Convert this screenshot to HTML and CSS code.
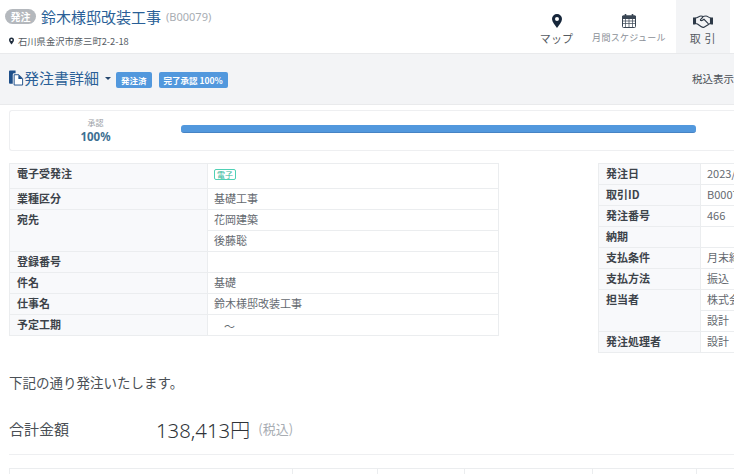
FILE: index.html
```html
<!DOCTYPE html>
<html lang="ja">
<head>
<meta charset="utf-8">
<title>発注書詳細</title>
<link rel="stylesheet" href="styles.css">
</head>
<body>
<header class="top">
  <div class="top-info">
    <div class="title-row">
      <span class="pill">発注</span>
      <span class="title">鈴木様邸改装工事</span>
      <span class="code">(B00079)</span>
    </div>
    <div class="address">
      <svg class="pin-small" viewBox="0 0 10 14"><path fill="#1f2d3d" fill-rule="evenodd" d="M5 0a5 5 0 0 1 5 5c0 3-3 6-5 9C3 11 0 8 0 5a5 5 0 0 1 5-5zm0 3a2 2 0 1 0 0 4 2 2 0 0 0 0-4z"/></svg>
      <span>石川県金沢市彦三町2-2-18</span>
    </div>
  </div>
  <nav class="tabs">
    <div class="tab tab-map">
      <svg class="tab-icon" width="10" height="14" viewBox="0 0 10 14"><path fill="#16263a" fill-rule="evenodd" d="M5 0a5 5 0 0 1 5 5c0 3-3 6-5 9C3 11 0 8 0 5a5 5 0 0 1 5-5zm0 3a2 2 0 1 0 0 4 2 2 0 0 0 0-4z"/></svg>
      <span class="tab-label">マップ</span>
    </div>
    <div class="tab tab-cal">
      <svg class="tab-icon" width="14" height="14" viewBox="0 0 14 14" fill="none" stroke="#3a4654"><rect x=".5" y="2" width="13" height="11.500" rx="1"/><path d="M.5 2h13v2.500H.5z" fill="#3a4654"/><path d="M3.500 0v3M10.500 0v3" stroke-width="1.600"/><path d="M.5 7h13M.5 9.500h13M3.500 4.500v9M7 4.500v9M10.500 4.500v9" stroke-width=".7"/></svg>
      <span class="tab-label tab-label-small">月間スケジュール</span>
    </div>
    <div class="tab tab-deal">
      <svg class="tab-icon" width="20" height="14" viewBox="0 0 20 14" fill="none" stroke="#2d3947"><path d="M0 3.500h2.500v7H0zM17.500 3.500H20v7h-2.500z" fill="#2d3947" stroke="none"/><path d="M2.500 4C5 3.500 6 2 8 2c1 0 1.500.5 2 .5S12 2 13 2c1.500 0 2.500 1.500 4.500 2v5.500c-1 0-1.500.5-2 1L11 13.200c-1 .5-2 0-3-.7L4.500 10c-.5-.5-1-.5-2-.5z" stroke-width="1.100"/><path d="M10 3 7.500 5.500c-.5 1 1 1.500 2 .8l1.500-1 4.500 4.500" stroke-width="1.100"/></svg>
      <span class="tab-label tab-label-wide">取 引</span>
    </div>
  </nav>
</header>

<section class="toolbar">
  <div class="toolbar-left">
    <svg class="doc-icon" width="15" height="16" viewBox="0 0 16 16"><path fill="#1e4f8a" d="M0 1a1 1 0 0 1 1-1h6v3H5.500A1.500 1.500 0 0 0 4 4.500V14H1a1 1 0 0 1-1-1z"/><path fill="#fff" stroke="#1e4f8a" d="M5.500 4.500h5l4 4v7h-9z"/><path fill="#1e4f8a" d="M10 4.500v4.500h4.500z"/></svg>
    <h1 class="page-title">発注書詳細</h1>
    <span class="caret"></span>
    <span class="badge">発注済</span>
    <span class="badge badge-wide">完了承認 100%</span>
  </div>
  <span class="tax">税込表示</span>
</section>

<section class="progress-card">
  <div class="progress-text">
    <div class="progress-label">承認</div>
    <div class="progress-value">100%</div>
  </div>
  <div class="bar"></div>
</section>

<section class="tables">
  <table class="info info-left">
    <tr class="row-first"><th>電子受発注</th><td><span class="tag">電子</span></td></tr>
    <tr><th>業種区分</th><td>基礎工事</td></tr>
    <tr><th rowspan="2">宛先</th><td>花岡建築</td></tr>
    <tr><td>後藤聡</td></tr>
    <tr><th>登録番号</th><td></td></tr>
    <tr><th>件名</th><td>基礎</td></tr>
    <tr><th>仕事名</th><td>鈴木様邸改装工事</td></tr>
    <tr><th>予定工期</th><td class="period">～</td></tr>
  </table>
  <table class="info info-right">
    <tr><th>発注日</th><td>2023/05/01</td></tr>
    <tr><th>取引ID</th><td>B00079</td></tr>
    <tr><th>発注番号</th><td>466</td></tr>
    <tr><th>納期</th><td></td></tr>
    <tr><th>支払条件</th><td>月末締め</td></tr>
    <tr><th>支払方法</th><td>振込</td></tr>
    <tr><th rowspan="2">担当者</th><td>株式会社</td></tr>
    <tr><td>設計</td></tr>
    <tr><th>発注処理者</th><td>設計</td></tr>
  </table>
</section>

<p class="message">下記の通り発注いたします。</p>

<div class="total">
  <span class="total-label">合計金額</span>
  <span class="total-value">138,413円</span>
  <span class="total-tax">(税込)</span>
</div>

<div class="bottom-grid">
  <div class="cell cell-a"></div>
  <div class="cell cell-b"></div>
  <div class="cell cell-c"></div>
  <div class="cell cell-d"></div>
  <div class="cell cell-e"></div>
  <div class="cell cell-f"></div>
</div>
</body>
</html>
```
FILE: styles.css
```css
* { box-sizing: border-box; }
html, body { margin: 0; height: 474px; overflow: hidden; }
body {
  width: 734px;
  background: #fff;
  color: #4a4f55;
  font-family: "Noto Sans CJK JP", "Noto Sans", sans-serif;
  font-size: 11px;
}

/* header */
.top {
  height: 54px;
  display: flex;
  justify-content: space-between;
  border-bottom: 1px solid #e9eaec;
}
.top-info { padding: 5px 0 0 5px; }
.title-row { display: flex; align-items: center; height: 22px; }
.pill {
  width: 31px;
  height: 15px;
  border-radius: 8px;
  background: #b4b8bd;
  color: #fff;
  font-size: 10px;
  font-weight: 700;
  line-height: 15px;
  text-align: center;
}
.title { margin-left: 5px; color: #2a5f97; font-size: 15px; }
.code { margin-left: 5px; color: #a8adb3; font-size: 11px; font-family: "Noto Sans", sans-serif; }
.address {
  display: flex;
  align-items: center;
  margin: 7px 0 0 4px;
  font-size: 9.300px;
  color: #555b62;
}
.pin-small { width: 5px; height: 8px; margin-right: 4px; }

.tabs { display: flex; }
.tab {
  height: 53px;
  display: flex;
  flex-direction: column;
  align-items: center;
  padding-top: 14px;
}
.tab-icon { flex: none; }
.tab-map { width: 49px; margin-right: 5px; }
.tab-cal { width: 86px; margin-right: 4px; }
.tab-deal { width: 54px; margin-right: 4px; background: #f3f4f6; }
.tab-label { margin-top: 2px; font-size: 11px; line-height: 16px; letter-spacing: .2px; color: #555b62; }
.tab-label-small { font-size: 9px; color: #8b9097; letter-spacing: .3px; white-space: nowrap; }
.tab-label-wide { letter-spacing: .6px; }

/* toolbar */
.toolbar {
  height: 51px;
  background: #f3f4f6;
  border-bottom: 1px solid #e9eaec;
  display: flex;
  align-items: center;
  justify-content: space-between;
  padding: 0 0 2px 9px;
}
.toolbar-left { display: flex; align-items: center; }
.doc-icon { flex: none; }
.page-title { margin: 0; color: #2a5f97; font-size: 15px; font-weight: 400; line-height: 20px; }
.caret {
  margin: 0 5px 0 6px;
  border-left: 3px solid transparent;
  border-right: 3px solid transparent;
  border-top: 3px solid #24466e;
}
.badge {
  height: 16px;
  padding: 0 5px;
  margin-right: 7px;
  margin-top: 4px;
  border-radius: 2px;
  background: #5298dd;
  color: #fff;
  font-size: 8.500px;
  font-weight: 700;
  line-height: 16px;
}
.tax { font-size: 10.500px; color: #4a4f55; white-space: nowrap; width: 42px; overflow: hidden; }

/* progress */
.progress-card {
  display: flex;
  align-items: center;
  height: 41px;
  margin: 5px 0 0 9px;
  border: 1px solid #eeeff1;
  border-right: 0;
  border-radius: 3px 0 0 3px;
}
.progress-text { width: 171px; text-align: center; }
.progress-label { font-size: 8px; line-height: 12px; color: #9ba0a6; }
.progress-value { font-size: 11.500px; line-height: 15px; font-weight: 700; color: #3d6f92; font-family: "Noto Sans", sans-serif; }
.bar {
  width: 515px;
  height: 8px;
  margin-bottom: 4px;
  border-radius: 3px;
  background: #5298dd;
  border-bottom: 1px solid #4683c4;
}

/* info tables */
.tables { display: flex; align-items: flex-start; margin: 12px 0 0 9px; }
.info {
  flex: none;
  border-collapse: collapse;
  table-layout: fixed;
  font-size: 11px;
}
.info th, .info td {
  height: 21px;
  border: 1px solid #ebedef;
  padding: 2px 6px 0;
  line-height: 15px;
  text-align: left;
  vertical-align: top;
  white-space: nowrap;
  overflow: hidden;
}
.info th { background: #f8f9fb; color: #3d434a; font-weight: 700; padding-left: 7px; }
.info td { color: #64696f; }
.info-left { width: 490px; }
.info-left th { width: 198px; }
.info .row-first th, .info .row-first td { height: 25px; }
.info-right { width: 200px; margin-left: 99px; }
.info-right th { width: 102px; }
.tag {
  display: inline-block;
  height: 11px;
  padding: 0 2px;
  border: 1px solid #4fd1b5;
  border-radius: 2px;
  color: #35b89b;
  font-size: 8px;
  line-height: 9px;
  vertical-align: top;
  margin-top: 3px;
}
.info .period { padding-left: 16px; padding-top: 4px; }

/* lower */
.message { margin: 20px 0 0 9px; font-size: 13.500px; line-height: 18px; color: #4a4f55; }
.total {
  display: flex;
  align-items: center;
  height: 37px;
  margin: 19px 0 7px 9px;
}
.total-label { width: 147px; font-size: 15px; }
.total-value { font-size: 20.300px; font-family: "Noto Sans", "Noto Sans CJK JP", sans-serif; color: #2f3338; font-weight: 300; }
.total-tax { margin-left: 8px; font-size: 13px; color: #a8adb3; }
.bottom-grid {
  display: flex;
  height: 30px;
  margin: 0 0 0 9px;
  padding-top: 13px;
  border-top: 1px solid #eeeff1;
}
.cell { height: 16px; border-top: 1px solid #ebedef; border-right: 1px solid #ebedef; }
.cell-a { width: 284px; border-left: 1px solid #ebedef; }
.cell-b { width: 85px; }
.cell-c { width: 87px; }
.cell-d { width: 128px; }
.cell-e { width: 104px; }
.cell-f { flex: 1; border-right: 0; }
```
